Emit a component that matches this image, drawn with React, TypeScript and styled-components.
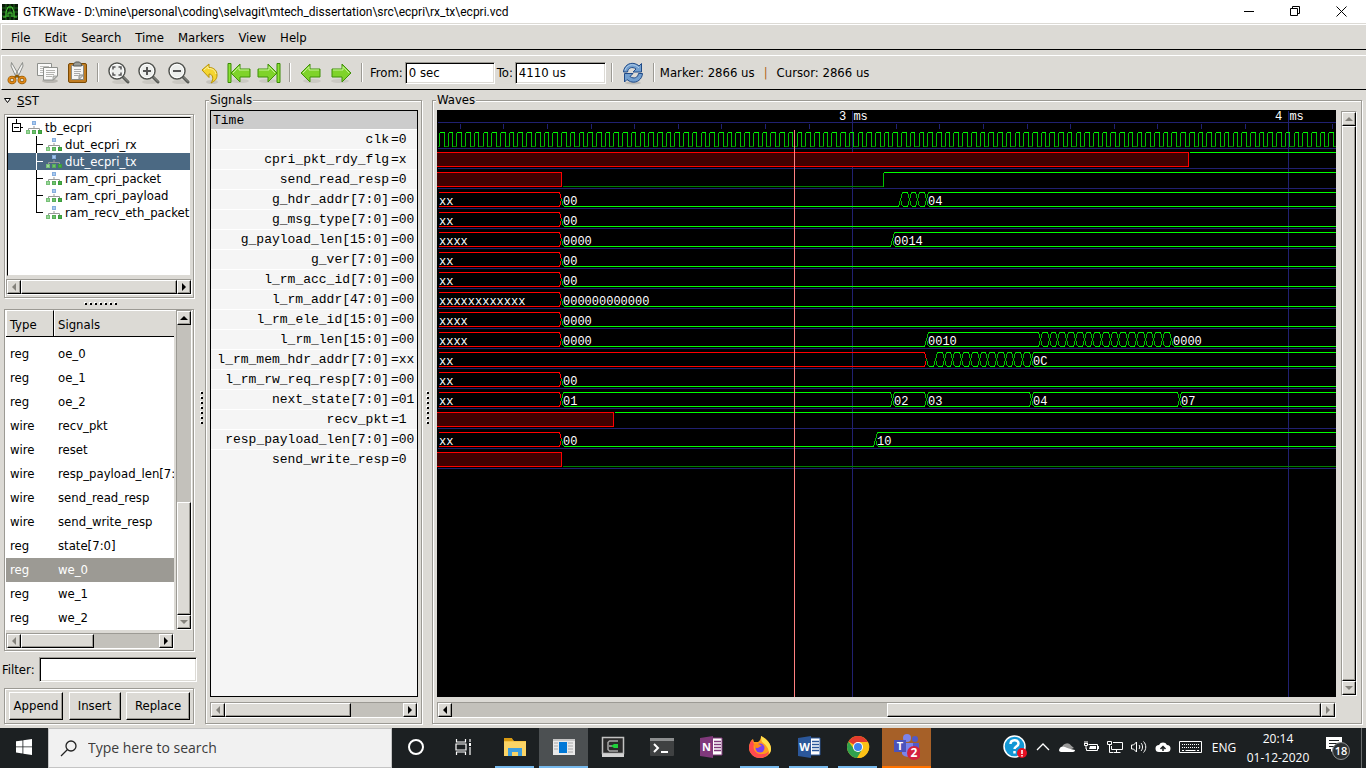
import React from "react";
import styled, { createGlobalStyle, css } from "styled-components";

const face = "#dcdad5";
const dark = "#9c9a94";
const trough = "#c3c1bb";
const ui = `"DejaVu Sans Condensed", "Noto Sans", sans-serif`;
const mono = `"Liberation Mono", monospace`;
const segoe = `"Open Sans", "Noto Sans", sans-serif`;

const Global = createGlobalStyle`
  * { box-sizing: border-box; }
  body { margin: 0; background: ${face}; color: #000; }
  button, input { font: inherit; color: inherit; }
`;

const raised = css`
  background: ${face};
  border: 1px solid;
  border-color: #fff #000 #000 #fff;
  box-shadow: inset -1px -1px ${dark};
`;
const etched = css`
  border: 1px solid ${dark};
  box-shadow: 1px 1px #fff, inset 1px 1px #fff;
`;

const Desktop = styled.div`
  height: 100vh;
  min-height: 600px;
  display: flex;
  flex-direction: column;
  overflow: hidden;
  font: 13px/16px ${ui};
`;

/* Title bar */
const TitleBar = styled.header`
  height: 23px;
  flex: none;
  display: flex;
  align-items: center;
  padding: 0 2px;
  gap: 5px;
  background: #fff;
  font: 12px/16px Roboto, ${segoe};
`;
const Title = styled.h1`
  flex: 1;
  margin: 0;
  font: inherit;
`;
const WinButtons = styled.div`
  display: flex;
`;
const WinButton = styled.button`
  width: 46px;
  height: 23px;
  padding: 0;
  border: 0;
  background: none;
  display: grid;
  place-items: center;
`;

/* Menus and toolbar */
const MenuBar = styled.nav`
  flex: none;
  height: 26px;
  margin: 1px 0 0 1px;
  padding: 1px 2px 0;
  display: flex;
  align-items: center;
  border-top: 1px solid #fff;
  border-left: 1px solid #fff;
  border-bottom: 1px solid #000;
`;
const MenuItem = styled.button`
  border: 0;
  background: none;
  padding: 0 7px;
`;
const ToolBar = styled.div`
  flex: none;
  height: 35px;
  margin: 5px 0 0 1px;
  display: flex;
  align-items: center;
  border-top: 1px solid #fff;
  border-left: 1px solid #fff;
  border-bottom: 1px solid #000;
`;
const Tool = styled.button`
  width: 30px;
  height: 30px;
  padding: 0;
  border: 0;
  background: none;
  display: grid;
  place-items: center;
`;
const Separator = styled.span`
  width: 2px;
  height: 19px;
  margin: 0 5px;
  border-left: 1px solid ${dark};
  border-right: 1px solid #fff;
`;
const Field = styled.label`
  display: flex;
  align-items: center;
  margin-left: 2px;
  gap: 2px;
`;
const TextBox = styled.input<{ $w?: number }>`
  width: ${p => (p.$w ? p.$w + "px" : "auto")};
  ${p => !p.$w && "flex: 1; min-width: 0;"}
  height: ${p => (p.$w ? 22 : 25)}px;
  padding: 0 3px;
  border: 1px solid;
  border-color: ${dark} #fff #fff ${dark};
  box-shadow: inset 1px 1px #000, inset -1px -1px ${face};
  background: #fff;
  outline: 0;
`;
const Readout = styled.output`
  display: flex;
  gap: 9px;
  white-space: nowrap;
`;
const Bar = styled.span`
  color: #b0641c;
`;

/* Work area */
const Work = styled.main`
  flex: 1;
  min-height: 0;
  display: flex;
  padding: 2px 4px 4px 0;
`;
const Sidebar = styled.aside`
  width: 197px;
  flex: none;
  display: flex;
  flex-direction: column;
`;
const Expander = styled.button`
  height: 17px;
  padding: 1px 0 0 4px;
  margin-bottom: 5px;
  border: 0;
  background: none;
  display: flex;
  align-items: center;
  gap: 6px;
`;
const Box = styled.div<{ $h?: number }>`
  ${etched}
  width: 190px;
  margin-left: 4px;
  ${p => (p.$h ? `height: ${p.$h}px; flex: none;` : "flex: 1; min-height: 0;")}
  display: flex;
  flex-direction: column;
`;
const Sunken = styled.ul`
  flex: 1;
  margin: 2px 2px 3px;
  padding: 1px 0 0;
  list-style: none;
  background: #fff;
  border: 1px solid;
  border-color: #000 ${face} ${face} #000;
`;
const TreeRow = styled.li<{ $on?: boolean }>`
  height: 17px;
  display: flex;
  align-items: center;
  white-space: nowrap;
  gap: 3px;
  ${p => p.$on && "background: #4b6983; color: #fff;"}
`;
const TreeFoot = styled.div`
  display: flex;
  flex-direction: column;
  margin: 0 1px 2px;
`;
const Grip = styled.div<{ $v?: boolean; $size: number }>`
  flex: none;
  ${p => (p.$v ? `width: ${p.$size}px;` : `height: ${p.$size}px; margin-left: 5px;`)}
  display: grid;
  place-items: center;
`;

/* Scrollbars */
const Track = styled.div<{ $v?: boolean }>`
  flex: none;
  display: flex;
  flex-direction: ${p => (p.$v ? "column" : "row")};
  ${p => (p.$v ? "width: 16px;" : "height: 16px;")}
  background: ${trough};
  border: 1px solid;
  border-color: ${dark} #fff #fff ${dark};
`;
const ArrowButton = styled.button`
  ${raised}
  flex: none;
  width: 14px;
  height: 14px;
  padding: 0;
  display: grid;
  place-items: center;
`;
const Rail = styled.div<{ $v?: boolean; $end?: boolean }>`
  flex: 1;
  min-height: 0;
  display: flex;
  flex-direction: ${p => (p.$v ? "column" : "row")};
  justify-content: ${p => (p.$end ? "flex-end" : "flex-start")};
`;
const Thumb = styled.div`
  ${raised}
`;

const turns = { left: 0, up: 90, right: 180, down: 270 };
function Arrow({ dir, off }: { dir: keyof typeof turns; off?: boolean }) {
  return (
    <svg width="8" height="8" viewBox="0 0 8 8">
      <path d="M6 0v8L2 4z" fill={off ? "#84827c" : "#000"} transform={`rotate(${turns[dir]} 4 4)`} />
    </svg>
  );
}
type ScrollProps = { v?: boolean; size: string; end?: boolean; offA?: boolean; offB?: boolean; label: string };
function Scroll({ v, size, end, offA, offB, label }: ScrollProps) {
  return (
    <Track $v={v} role="scrollbar" aria-label={label} aria-orientation={v ? "vertical" : "horizontal"}>
      <ArrowButton aria-label="Back"><Arrow dir={v ? "up" : "left"} off={offA} /></ArrowButton>
      <Rail $v={v} $end={end}>
        <Thumb style={v ? { height: size } : { width: size }} />
      </Rail>
      <ArrowButton aria-label="Forward"><Arrow dir={v ? "down" : "right"} off={offB} /></ArrowButton>
    </Track>
  );
}
function Dots({ v }: { v?: boolean }) {
  const at = [0, 1, 2, 3, 4, 5, 6];
  return (
    <svg width={v ? 3 : 34} height={v ? 34 : 3} shapeRendering="crispEdges">
      {at.map(i => (
        <g key={i} transform={v ? `translate(0 ${i * 5})` : `translate(${i * 5} 0)`}>
          <rect width="2" height="2" fill="#fff" />
          <rect x="1" y="1" width="2" height="2" fill="#000" />
        </g>
      ))}
    </svg>
  );
}

/* Signal search list */
const ListArea = styled.div`
  flex: 1;
  min-height: 0;
  display: flex;
  gap: 2px;
  padding: 0 1px 3px 1px;
`;
const ListView = styled.div`
  flex: 1;
  min-width: 0;
  display: flex;
  flex-direction: column;
  overflow: hidden;
  background: #fff;
`;
const ListHead = styled.div`
  height: 27px;
  flex: none;
  display: grid;
  grid-template-columns: 48px 1fr;
  background: ${face};
  border-bottom: 1px solid #000;
`;
const HeadCell = styled.button<{ $last?: boolean }>`
  padding: 2px 3px 0;
  text-align: left;
  background: none;
  border: solid #fff;
  border-width: 1px 0 0 1px;
  ${p => !p.$last && "border-right: 1px solid #000;"}
`;
const ListBody = styled.div`
  flex: 1;
  min-height: 0;
  display: flex;
  flex-direction: column;
  justify-content: flex-end;
  overflow: hidden;
`;
const SignalTable = styled.table`
  width: 100%;
  table-layout: fixed;
  border-collapse: collapse;
`;
const SignalRow = styled.tr<{ $on?: boolean }>`
  height: 24px;
  white-space: nowrap;
  ${p => p.$on && `background: ${dark}; color: #fff;`}
`;
const Cell = styled.td<{ $w?: number }>`
  width: ${p => (p.$w ? p.$w + "px" : "auto")};
  padding: 0 0 0 4px;
  overflow: hidden;
`;
const ListFoot = styled.div`
  width: 168px;
  margin: 0 0 1px 1px;
  display: flex;
  flex-direction: column;
`;
const FilterRow = styled.label`
  flex: none;
  display: flex;
  align-items: center;
  gap: 4px;
  margin: 6px 0;
  padding-left: 2px;
`;
const Buttons = styled.div`
  flex: 1;
  display: flex;
  justify-content: space-between;
  padding: 3px 3px 3px 4px;
`;
const PushButton = styled.button<{ $w: number }>`
  ${raised}
  width: ${p => p.$w}px;
  padding: 0;
`;

/* Signals and waves panels */
const Panel = styled.fieldset<{ $w?: number; $pad: string }>`
  ${etched}
  margin: 0;
  padding: ${p => p.$pad};
  min-width: 0;
  ${p => (p.$w ? `width: ${p.$w}px; flex: none;` : "flex: 1;")}
  display: flex;
  flex-direction: column;
  legend {
    padding: 0 1px;
    margin-left: -1px;
    background: ${face};
  }
`;
const NameList = styled.div`
  flex: 1;
  min-height: 0;
  margin-bottom: 5px;
  background: #f5f5f5;
  border: 1px solid #000;
  overflow: hidden;
  font: 13px/17px ${mono};
`;
const Names = styled.table`
  width: 100%;
  border-collapse: collapse;
  table-layout: fixed;
  th, td { padding: 0; font-weight: normal; white-space: nowrap; vertical-align: top; }
  thead th { background: #cccccc; height: 18px; text-align: left; padding: 1px 0 0 2px; }
`;
const NameRow = styled.tr`
  height: 20px;
  border-top: 1px solid #fff;
  td { padding-top: 1px; }
  td:first-child { text-align: right; padding-right: 2px; }
`;
const ValueCol = styled.col`
  width: 26px;
`;
const WaveArea = styled.div`
  flex: 1;
  min-height: 0;
  display: flex;
  gap: 5px;
`;
const WaveView = styled.div`
  flex: 1;
  min-width: 0;
  background: #000;
  overflow: hidden;
  svg { display: block; width: 100%; height: 100%; }
`;
const WaveScroll = styled.div`
  display: flex;
  flex-direction: column;
  padding: 1px 0;
  & > * { flex: 1; }
`;
const WaveFoot = styled.div`
  display: flex;
  flex-direction: column;
  margin: 5px 21px 0 0;
`;

/* Wave data. Time positions are pixels from the left edge of the view. */
type Step = [at: number, text: string];
type Trace =
  | { name: string; value: string; bit: [number, "x" | "0" | "1"][] }
  | { name: string; value: string; bus: Step[] };

const PERIOD = 8.72;
const run = (from: number, n: number): Step[] =>
  Array.from({ length: n }, (_, i) => [Math.round(from + i * PERIOD), "~"] as Step);

const traces: Trace[] = [
  { name: "clk", value: "0", bit: [] },
  { name: "cpri_pkt_rdy_flg", value: "x", bit: [[0, "x"], [751, "1"]] },
  { name: "send_read_resp", value: "0", bit: [[0, "x"], [124, "0"], [446, "1"]] },
  { name: "g_hdr_addr[7:0]", value: "00", bus: [[0, "xx"], [124, "00"], ...run(463, 3), [489, "04"]] },
  { name: "g_msg_type[7:0]", value: "00", bus: [[0, "xx"], [124, "00"]] },
  { name: "g_payload_len[15:0]", value: "00", bus: [[0, "xxxx"], [124, "0000"], [455, "0014"]] },
  { name: "g_ver[7:0]", value: "00", bus: [[0, "xx"], [124, "00"]] },
  { name: "l_rm_acc_id[7:0]", value: "00", bus: [[0, "xx"], [124, "00"]] },
  { name: "l_rm_addr[47:0]", value: "00", bus: [[0, "xxxxxxxxxxxx"], [124, "000000000000"]] },
  { name: "l_rm_ele_id[15:0]", value: "00", bus: [[0, "xxxx"], [124, "0000"]] },
  { name: "l_rm_len[15:0]", value: "00", bus: [[0, "xxxx"], [124, "0000"], [489, "0010"], ...run(603, 15), [734, "0000"]] },
  { name: "l_rm_mem_hdr_addr[7:0]", value: "xx", bus: [[0, "xx"], [489, "0"], ...run(498, 11), [594, "0C"]] },
  { name: "l_rm_rw_req_resp[7:0]", value: "00", bus: [[0, "xx"], [124, "00"]] },
  { name: "next_state[7:0]", value: "01", bus: [[0, "xx"], [124, "01"], [455, "02"], [489, "03"], [594, "04"], [742, "07"]] },
  { name: "recv_pkt", value: "1", bit: [[0, "x"], [176, "1"]] },
  { name: "resp_payload_len[7:0]", value: "00", bus: [[0, "xx"], [124, "00"], [438, "10"]] },
  { name: "send_write_resp", value: "0", bit: [[0, "x"], [124, "0"]] },
];
const FAR = 4000;

function Clock() {
  const n = Math.ceil(FAR / PERIOD);
  let hi = "", lo = "M0 36H2", edge = "";
  for (let i = 0; i < n; i++) {
    const a = Math.round(2 + i * PERIOD);
    const b = Math.round(6.6 + i * PERIOD);
    const c = Math.round(2 + (i + 1) * PERIOD);
    hi += `M${a} 22H${b}`;
    lo += `M${b} 36H${c}`;
    edge += `M${a} 22V36M${b} 22V36`;
  }
  return (
    <>
      <path d={edge} stroke="#00c000" />
      <path d={lo} stroke="#008000" />
      <path d={hi} stroke="#00ff00" />
    </>
  );
}

function BitTrace({ steps, y }: { steps: [number, string][]; y: number }) {
  return (
    <>
      {steps.map(([x, s], i) => {
        const end = steps[i + 1]?.[0] ?? FAR;
        if (s === "x")
          return <rect key={i} x={x - (i ? 0 : 2)} y={y} width={end - x + (i ? 0 : 2)} height="14" fill="#400000" stroke="#ff0000" />;
        const prev = steps[i - 1]?.[1];
        return (
          <g key={i}>
            <path d={`M${prev === "x" ? x + 1 : x} ${s === "1" ? y : y + 14}H${end}`} stroke={s === "1" ? "#00ff00" : "#008000"} />
            {prev === "0" && <path d={`M${x} ${y}v14`} stroke="#00c000" />}
          </g>
        );
      })}
    </>
  );
}

const isZero = (t: string) => /^0+$/.test(t);
function BusTrace({ steps, y }: { steps: Step[]; y: number }) {
  return (
    <>
      {steps.map(([x, text], i) => {
        const next = steps[i + 1];
        const red = text[0] === "x";
        const a = i ? x + 2 : 1;
        const b = next ? next[0] - 2 : FAR;
        const zero = isZero(text);
        let sides = "";
        if (i) sides += `M${x} ${y + 7}L${a} ${y + 14}` + (zero ? "" : `M${x} ${y + 7}L${a} ${y}`);
        if (next) sides += `M${b} ${y + 14}L${b + 2} ${y + 7}` + (zero ? "" : `M${b} ${y}L${b + 2} ${y + 7}`);
        return (
          <g key={i}>
            <path d={sides} stroke={red ? "#ff0000" : "#00c000"} />
            <path d={`M${a} ${y + 14}H${b}` + (zero ? "" : `M${a} ${y}H${b}`)} stroke={red ? "#ff0000" : "#00ff00"} />
          </g>
        );
      })}
    </>
  );
}

function Waves() {
  const ticks = Array.from({ length: 90 }, (_, i) => Math.round(22.8 + i * 43.6));
  return (
    <svg role="img" aria-label="Signal waveforms">
      <g shapeRendering="crispEdges" transform="translate(.5 .5)" fill="none">
        <g stroke="#202070">
          <path d={`M0 12H${FAR}`} />
          {ticks.map((t, i) => <path key={t} d={i % 10 === 9 ? `M${t} 0V${FAR}` : `M${t} 13v5`} />)}
          {traces.map((_, i) => <path key={i} d={`M0 ${38 + i * 20}H${FAR}`} />)}
        </g>
        <Clock />
        {traces.map((t, i) =>
          "bus" in t
            ? <BusTrace key={t.name} steps={t.bus} y={22 + i * 20} />
            : <BitTrace key={t.name} steps={t.bit} y={22 + i * 20} />
        )}
        <path d={`M357 19V${FAR}`} stroke="#ff8080" />
      </g>
      <g fill="#fff" fontFamily="Liberation Mono, monospace" fontSize="12">
        <text x="402" y="10" xmlSpace="preserve">3 ms</text>
        <text x="838" y="10" xmlSpace="preserve">4 ms</text>
        {traces.map((t, i) =>
          "bus" in t && t.bus.filter(s => s[1] !== "~" && s[1] !== "0").map(([x, s]) => (
            <text key={t.name + x} x={x + 2} y={35 + i * 20}>{s}</text>
          ))
        )}
      </g>
    </svg>
  );
}

/* Toolbar icons */
const Ico = ({ children, size = 24 }: { children: React.ReactNode; size?: number }) => (
  <svg width={size} height={size} viewBox="0 0 24 24" fill="none">{children}</svg>
);
const Cut = () => (
  <Ico>
    <path d="M6.500 1.500l7 12-2 3.500L6 5zM17.500 1.500l-7 12 2 3.500L18 5z" fill="#f4f4f2" stroke="#8c8e8a" />
    <ellipse cx="7" cy="19" rx="3" ry="2.700" stroke="#8f5902" strokeWidth="3" /><ellipse cx="17" cy="19" rx="3" ry="2.700" stroke="#8f5902" strokeWidth="3" />
    <ellipse cx="7" cy="19" rx="3" ry="2.700" stroke="#e58a1c" strokeWidth="1.500" /><ellipse cx="17" cy="19" rx="3" ry="2.700" stroke="#e58a1c" strokeWidth="1.500" />
    <path d="M9.500 16.500l2.500-2 2.500 2" stroke="#8f5902" strokeWidth="2" />
  </Ico>
);
const Copy = () => (
  <Ico>
    <ellipse cx="15" cy="20" rx="8" ry="2" fill="#b8b6b0" />
    <path d="M2.500 2.500h14v12h-14z" fill="#fafaf9" stroke="#8e908c" />
    <path d="M5 5.500h9M5 7.500h9M5 9.500h3M5 11.500h3" stroke="#bdbdba" />
    <path d="M8.500 6.500h14V15l-4 4h-10z" fill="#fafaf9" stroke="#8e908c" />
    <path d="M11 9.500h9M11 11.500h9M11 13.500h8M11 15.500h6" stroke="#b4b4b0" /><path d="M22 15h-4v4z" fill="#c9c9c5" stroke="#8e908c" strokeWidth=".7" />
  </Ico>
);
const Paste = () => (
  <Ico>
    <rect x="3.500" y="2.500" width="18" height="19" rx="1.500" fill="#c17d22" stroke="#7a4a05" />
    <path d="M6.500 4.500h12v14h-12z" fill="#f6f6f5" stroke="#888a85" />
    <path d="M9 8.500h7M9 10.500h7M9 12.500h6M9 14.500h4" stroke="#aaa" />
    <path d="M14 18.500l4.500-4.500h-4.500z" fill="#cfcfcc" stroke="#888a85" />
    <path d="M8.500 5V3l2-2h4l2 2v2z" fill="#9a9c97" stroke="#555753" />
  </Ico>
);
const Lens = ({ kind }: { kind: "fit" | "in" | "out" }) => (
  <Ico>
    <ellipse cx="13" cy="21" rx="8" ry="2" fill="#cbc9c3" />
    <path d="M16 16l5 5" stroke="#555753" strokeWidth="3" strokeLinecap="round" />
    <path d="M16 15.500l5 5" stroke="#999b96" strokeLinecap="round" />
    <circle cx="10" cy="10" r="8" fill="#eceeec" stroke="#50524e" strokeWidth="1.500" /><circle cx="10" cy="10" r="6.700" stroke="#fff" />
    {kind === "fit" && <path d="M8.500 6H6v2.500M11.500 6H14v2.500M8.500 14H6v-2.500M11.500 14H14v-2.500" stroke="#555" strokeWidth="1.500" />}
    {kind !== "fit" && <path d="M6 10h8" stroke="#555" strokeWidth="2" />}
    {kind === "in" && <path d="M10 6v8" stroke="#555" strokeWidth="2" />}
  </Ico>
);
const Undo = () => (
  <Ico>
    <ellipse cx="15" cy="21" rx="6" ry="2" fill="#c6c4be" />
    <path d="M5 9l7-6v3.500c5 0 8 3 8 7.500 0 4-2 6-6 8 3-4 2-9-2-9v3.500z" fill="#f5d531" stroke="#b89303" strokeLinejoin="round" />
    <path d="M7 9l4-3.500v2c5 0 7 2 8 5.500" stroke="#fdf3a2" />
  </Ico>
);
const Green = ({ right, stop }: { right?: boolean; stop?: boolean }) => (
  <Ico>
    <g transform={right ? "translate(24 0) scale(-1 1)" : undefined}>
      <ellipse cx="13" cy="20" rx="9" ry="2" fill="#cbc9c3" />
      <g transform={stop ? "translate(3 0)" : "translate(1 0)"}>
        <path d="M1 12l9-9v5h10v8H10v5z" fill="#7fd32a" stroke="#3f9008" strokeLinejoin="round" />
        <path d="M3 12l6-6.300V9h10" stroke="#c8f49a" />
      </g>
      {stop && <path d="M1 2.500h3v19H1z" fill="#8be234" stroke="#3a8a06" />}
    </g>
  </Ico>
);
const Refresh = () => (
  <Ico>
    <ellipse cx="12" cy="22" rx="8" ry="1.500" fill="#bebcb6" />
    <path d="M2.500 11C3 5 8 1.500 13 2.500c2 .3 4 1.500 5 2.500l2.500-2.500V11H12l3-3c-4-3-8-1-8.500 3z" fill="#729fcf" stroke="#204a87" strokeLinejoin="round" />
    <path d="M21.500 12.500c-.5 6-5.500 9.500-10.500 8.500-2-.3-4-1.500-5-2.500L3.500 21v-8.500H12l-3 3c4 3 8 1 8.500-3z" fill="#729fcf" stroke="#204a87" strokeLinejoin="round" />
    <path d="M4 9.500c1-4 5-6.500 9-5.500 2 .5 3.500 1.500 5 3" stroke="#b7d0ea" />
  </Ico>
);
const Module = () => (
  <svg width="16" height="14" viewBox="0 0 16 14">
    <path d="M8 5v3M2.500 9V7.500h11V9" stroke="#999" fill="none" />
    <rect x="6.500" y=".5" width="3" height="3" fill="#a9c9ee" stroke="#86aede" />
    <rect x=".5" y="9.500" width="3" height="3" fill="#9ad69a" stroke="#77c077" />
    <rect x="6.500" y="9.500" width="3" height="3" fill="#6cc46c" stroke="#59ac59" />
    <rect x="12.500" y="9.500" width="3" height="3" fill="#46b146" stroke="#3c9a3c" />
  </svg>
);
function Branch({ last, light }: { last?: boolean; light?: boolean }) {
  return (
    <svg width="35" height="17" shapeRendering="crispEdges">
      <path d={`M28.500 0V${last ? 9 : 17}M28 8.500h7`} stroke={light ? "#fff" : "#000"} fill="none" />
    </svg>
  );
}
const RootMark = () => (
  <svg width="15" height="17" shapeRendering="crispEdges">
    <path d="M8.500 0v4M4.500 4.500h8v8h-8zM6 8.500h5M13 8.500h2" stroke="#000" fill="none" />
  </svg>
);

/* Taskbar */
const TaskBar = styled.footer`
  height: 40px;
  flex: none;
  display: flex;
  background: #1c2022;
  color: #fff;
  font: 12px/19px ${segoe};
`;
const Task = styled.button<{ $w: number; $bg?: string; $line?: string; $inset?: number }>`
  flex: none;
  width: ${p => p.$w}px;
  padding: 0;
  border: 0;
  background: ${p => p.$bg ?? "none"};
  display: grid;
  place-items: center;
  grid-template: 38px 2px / 1fr;
  &::after {
    content: "";
    justify-self: stretch;
    align-self: stretch;
    margin: 0 ${p => p.$inset ?? 0}px;
    background: ${p => p.$line ?? "none"};
  }
`;
const Search = styled.label`
  width: 344px;
  display: flex;
  align-items: center;
  padding-left: 11px;
  gap: 11px;
  background: #f1f1f1;
  border: 1px solid #c4c4c4;
  input {
    flex: 1;
    min-width: 0;
    padding: 0;
    border: 0;
    outline: 0;
    background: none;
    font: 14px/20px ${segoe};
  }
  input::placeholder { color: #3c3c3c; opacity: 1; }
`;
const Apps = styled.div`
  display: flex;
  margin-left: 2px;
`;
const Tray = styled.div`
  flex: 1;
  display: flex;
  justify-content: flex-end;
`;
const DateTime = styled.button`
  width: 74px;
  padding: 0;
  border: 0;
  background: none;
  white-space: nowrap;
`;
const ShowDesktop = styled.button`
  width: 5px;
  padding: 0;
  border: 0;
  border-left: 1px solid #6a6d6e;
  background: none;
`;

const WinLogo = () => (
  <svg width="16" height="16" viewBox="0 0 16 16" fill="#fff">
    <path d="M0 2.300l6.500-.9v6.100H0zM7.300 1.300L16 0v7.500H7.300zM0 8.300h6.500v6.200L0 13.600zM7.300 8.300H16V16l-8.700-1.300z" />
  </svg>
);
const Mag = () => (
  <svg width="17" height="17" viewBox="0 0 17 17" fill="none" stroke="#222" strokeWidth="1.300">
    <circle cx="11" cy="6" r="5" /><path d="M7.500 9.500L1 16" />
  </svg>
);
const TaskView = () => (
  <svg width="18" height="18" viewBox="0 0 18 18" fill="none" stroke="#fff" strokeWidth="1.200">
    <path d="M1.500 1v3h9V1M1 6h10v6H1zM1.500 17v-3h9v3M15 1v3M15 9v8" /><rect x="14" y="5" width="2" height="3" fill="#fff" stroke="none" />
  </svg>
);
const Folder = () => (
  <Ico>
    <path d="M1 4h8l2 2h12v15H1z" fill="#f7c64a" /><path d="M1 3h8l1 3H1z" fill="#d99a12" /><path d="M1 7h22v14H1z" fill="#fbd465" />
    <path d="M5 21v-8h14v8h-4v-4H9v4z" fill="#3e9ede" />
  </Ico>
);
const AppWin = () => (
  <Ico>
    <path d="M1 4h22v16H1z" fill="#e9e9e9" /><path d="M1 4h22v2H1z" fill="#c5c5c5" />
    <path d="M7 7h8v11H7z" fill="#0078d7" /><path d="M16 8h5M16 11h5M16 14h5M16 17h5M2 8h4M2 11h4M2 14h4" stroke="#a8a8a8" />
  </Ico>
);
const Editor = () => (
  <Ico>
    <path d="M1.500 2.500h21v16h-21z" fill="#2a2a2a" stroke="#c2c2c2" strokeWidth="1.500" /><path d="M1 19h22v3H1z" fill="#d2d2d2" />
    <path d="M17 6H8.500L7 7.500v7L8.500 16H17M8 11h3" stroke="#a8a8a8" strokeWidth="1.500" /><path d="M10 11l3-2h4v4h-4z" fill="#1fd13a" />
  </Ico>
);
const Term = () => (
  <Ico>
    <rect y="3" width="24" height="18" rx="1" fill="#3f4142" /><path d="M0 3h24v3H0z" fill="#8d8f90" />
    <path d="M4 9l4 4-4 4" stroke="#fff" strokeWidth="2" /><path d="M11 17h7" stroke="#fff" strokeWidth="2" />
  </Ico>
);
const Office = ({ c, l }: { c: string; l: string }) => (
  <Ico>
    <path d="M12 3h11v17H12z" fill="#fff" stroke={c} /><path d="M15 6.500h7M15 9.500h7M15 12.500h7M15 15.500h7" stroke={c} strokeWidth="1.500" />
    <path d="M1 3l13-2v22L1 21z" fill={c} />
    <text x="7.500" y="16" textAnchor="middle" fontSize="11" fontWeight="700" fill="#fff" fontFamily="Open Sans, sans-serif">{l}</text>
  </Ico>
);
const Fox = () => (
  <Ico>
    <path d="M1 13c0-4 2-8 4-9l1 3h4c2-1 3-4 3-6 5 2 10 7 10 13 0 5-5 9-11 9S1 18 1 13z" fill="#ff9a1f" />
    <path d="M13 1c5 3 10 7 10 13 0 2-1 4-2 5 0-6-3-9-7-12-1-2-1-4-1-6z" fill="#ffe14d" />
    <path d="M1 13c0-3 1-6 3-8l2 4c-2 6 3 11 9 10 3 0 5-2 6-3-1 5-5 7-9 7C6 23 1 18 1 13z" fill="#ff4a4f" />
    <circle cx="12" cy="13" r="4.500" fill="#7a3ff0" /><path d="M6 9c3-1 5 0 8 2-2 0-3 2-5 2s-3-2-3-4z" fill="#ff8a16" />
  </Ico>
);
const Chrome = () => (
  <Ico>
    <circle cx="12" cy="12" r="11" fill="#fbc116" />
    <path d="M12 12L2.500 6.500A11 11 0 0 1 21.500 6.500L22 7H12z" fill="#e33b2e" />
    <path d="M2.500 6.500A11 11 0 0 0 11 23l5.500-9L12 12 8 14z" fill="#30a14e" />
    <path d="M12 7h10A11 11 0 0 1 11.500 23l5-9z" fill="#fbc116" />
    <circle cx="12" cy="12" r="5" fill="#fff" /><circle cx="12" cy="12" r="4" fill="#3f82ee" />
  </Ico>
);
const Teams = () => (
  <svg width="26" height="26" viewBox="0 0 26 26" fontFamily="Open Sans, sans-serif" fontWeight="700" textAnchor="middle" fill="#fff">
    <circle cx="13" cy="4" r="4" fill="#7b83eb" /><circle cx="21" cy="5" r="3" fill="#5059c9" />
    <path d="M8 9h11v8a6 6 0 0 1-11 3z" fill="#7b83eb" /><path d="M19 9h6v7a4 4 0 0 1-6 3z" fill="#5059c9" />
    <path d="M0 6h12v12H0z" fill="#4b53bc" /><text x="6" y="16" fontSize="11">T</text>
    <circle cx="20" cy="19" r="7" fill="#d3213f" /><text x="20" y="23" fontSize="12">2</text>
  </svg>
);
const Help = () => (
  <Ico>
    <circle cx="11.500" cy="11.500" r="10.500" fill="#1397d5" stroke="#fff" strokeWidth="1.500" />
    <path d="M7.500 9c0-5 8-5 8-.5 0 3-4 3-4 5.500M11.500 16v2.500" stroke="#fff" strokeWidth="2.500" />
    <circle cx="19" cy="18" r="5" fill="#e81123" /><path d="M19 15v4M19 20v1.500" stroke="#fff" strokeWidth="1.500" />
  </Ico>
);
const TI = ({ children, w = 16 }: { children: React.ReactNode; w?: number }) => (
  <svg width={w} height="16" viewBox={`0 0 ${w} 16`} fill="none" stroke="#fff">{children}</svg>
);
const Bell = () => (
  <svg width="28" height="28" viewBox="0 0 28 28">
    <path d="M2 4h16v12H10l-3 3v-3H2z" fill="#fff" /><path d="M5 7.500h10M5 10.500h10M5 13.500h6" stroke="#1c2022" />
    <circle cx="17" cy="18" r="8.500" fill="#2c3032" stroke="#8f9293" />
    <text x="17" y="22" fontSize="11" fontWeight="600" textAnchor="middle" fill="#fff" fontFamily="Open Sans, sans-serif">18</text>
  </svg>
);

const modules = ["dut_ecpri_rx", "dut_ecpri_tx", "ram_cpri_packet", "ram_cpri_payload", "ram_recv_eth_packet"];
const found = [
  ["reg", "clk"], ["reg", "oe_0"], ["reg", "oe_1"], ["reg", "oe_2"], ["wire", "recv_pkt"], ["wire", "reset"],
  ["wire", "resp_payload_len[7:0]"], ["wire", "send_read_resp"], ["wire", "send_write_resp"],
  ["reg", "state[7:0]"], ["reg", "we_0"], ["reg", "we_1"], ["reg", "we_2"],
];
const line = "#76b9ed";

export default function App() {
  return (
    <Desktop>
      <Global />
      <TitleBar>
        <svg width="16" height="16" viewBox="0 0 16 16">
          <path d="M0 0h16v16H0z" fill="#0a1a08" /><path d="M0 4h16M0 8h16M0 12h16M4 0v16M8 0v16M12 0v16" stroke="#1f6a1c" />
          <path d="M1 13h3V8l2-5h4l2 5v5h3M6 13V9h4v4" stroke="#4fd13a" fill="none" />
        </svg>
        <Title>GTKWave - D:\mine\personal\coding\selvagit\mtech_dissertation\src\ecpri\rx_tx\ecpri.vcd</Title>
        <WinButtons>
          <WinButton aria-label="Minimize"><svg width="11" height="11"><path d="M0 5.500h10" stroke="#000" /></svg></WinButton>
          <WinButton aria-label="Restore"><svg width="11" height="11" fill="none" stroke="#000"><path d="M.5 2.500h7v7h-7zM2.500 2.500v-2h7v7h-2" /></svg></WinButton>
          <WinButton aria-label="Close"><svg width="11" height="11"><path d="M.5.5l10 10M10.500.5l-10 10" stroke="#000" /></svg></WinButton>
        </WinButtons>
      </TitleBar>
      <MenuBar>
        {["File", "Edit", "Search", "Time", "Markers", "View", "Help"].map(m => <MenuItem key={m}>{m}</MenuItem>)}
      </MenuBar>
      <ToolBar>
        <Tool aria-label="Cut"><Cut /></Tool>
        <Tool aria-label="Copy"><Copy /></Tool>
        <Tool aria-label="Paste"><Paste /></Tool>
        <Separator />
        <Tool aria-label="Zoom fit"><Lens kind="fit" /></Tool>
        <Tool aria-label="Zoom in"><Lens kind="in" /></Tool>
        <Tool aria-label="Zoom out"><Lens kind="out" /></Tool>
        <Tool aria-label="Zoom undo"><Undo /></Tool>
        <Tool aria-label="To start"><Green stop /></Tool>
        <Tool aria-label="To end"><Green right stop /></Tool>
        <Separator />
        <Tool aria-label="Previous edge"><Green /></Tool>
        <Tool aria-label="Next edge"><Green right /></Tool>
        <Separator />
        <Field>From:<TextBox $w={90} defaultValue="0 sec" /></Field>
        <Field>To:<TextBox $w={91} defaultValue="4110 us" /></Field>
        <Separator />
        <Tool aria-label="Reload"><Refresh /></Tool>
        <Separator />
        <Readout><span>Marker: 2866 us</span><Bar>|</Bar><span>Cursor: 2866 us</span></Readout>
      </ToolBar>

      <Work>
        <Sidebar>
          <Expander>
            <svg width="7" height="6"><path d="M.5.5h6l-3 4z" fill="#fff" stroke="#000" /></svg>
            <span><u>S</u>ST</span>
          </Expander>
          <Box $h={184}>
            <Sunken>
              <TreeRow><RootMark /><Module />tb_ecpri</TreeRow>
              {modules.map((m, i) => (
                <TreeRow key={m} $on={i === 1}><Branch last={i === 4} light={i === 1} /><Module />{m}</TreeRow>
              ))}
            </Sunken>
            <TreeFoot><Scroll label="Tree" size="100%" offA /></TreeFoot>
          </Box>
          <Grip $size={11}><Dots /></Grip>
          <Box>
            <ListArea>
              <ListView>
                <ListHead><HeadCell>Type</HeadCell><HeadCell $last>Signals</HeadCell></ListHead>
                <ListBody>
                  <SignalTable>
                    <tbody>
                      {found.map(([t, s]) => (
                        <SignalRow key={s} $on={s === "we_0"}><Cell $w={48}>{t}</Cell><Cell>{s}</Cell></SignalRow>
                      ))}
                    </tbody>
                  </SignalTable>
                </ListBody>
              </ListView>
              <Scroll v label="Signal list" size="39%" end offB />
            </ListArea>
            <ListFoot><Scroll label="Signal list columns" size="53%" offA /></ListFoot>
          </Box>
          <FilterRow>Filter:<TextBox /></FilterRow>
          <Box $h={36}>
            <Buttons>
              <PushButton $w={54}>Append</PushButton>
              <PushButton $w={52}>Insert</PushButton>
              <PushButton $w={64}>Replace</PushButton>
            </Buttons>
          </Box>
        </Sidebar>
        <Grip $v $size={8}><Dots v /></Grip>
        <Panel $w={217} $pad="2px 3px 5px 4px">
          <legend>Signals</legend>
          <NameList>
            <Names>
              <colgroup><col /><ValueCol /></colgroup>
              <thead><tr><th colSpan={2}>Time</th></tr></thead>
              <tbody>
                {traces.map(t => <NameRow key={t.name}><td>{t.name}</td><td>={t.value}</td></NameRow>)}
              </tbody>
            </Names>
          </NameList>
          <Scroll label="Signal names" size="71%" offA />
        </Panel>
        <Grip $v $size={10}><Dots v /></Grip>
        <Panel $pad="2px 4px 5px 4px">
          <legend>Waves</legend>
          <WaveArea>
            <WaveView><Waves /></WaveView>
            <WaveScroll><Scroll v label="Waves rows" size="100%" offA offB /></WaveScroll>
          </WaveArea>
          <WaveFoot><Scroll label="Time" size="50%" end offB /></WaveFoot>
        </Panel>
      </Work>

      <TaskBar>
        <Task $w={48} aria-label="Start"><WinLogo /></Task>
        <Search><Mag /><input aria-label="Search" placeholder="Type here to search" /></Search>
        <Task $w={48} aria-label="Cortana"><svg width="18" height="18"><circle cx="9" cy="9" r="7" fill="none" stroke="#fff" strokeWidth="2" /></svg></Task>
        <Task $w={48} aria-label="Task view"><TaskView /></Task>
        <Apps>
          <Task $w={49} $line={line} $inset={5} aria-label="File Explorer"><Folder /></Task>
          <Task $w={49} $bg="#4c5052" $line={line} aria-label="GTKWave"><AppWin /></Task>
          <Task $w={49} aria-label="Editor"><Editor /></Task>
          <Task $w={49} aria-label="Terminal"><Term /></Task>
          <Task $w={49} aria-label="OneNote"><Office c="#80397b" l="N" /></Task>
          <Task $w={49} $line={line} $inset={5} aria-label="Firefox"><Fox /></Task>
          <Task $w={49} $line={line} $inset={5} aria-label="Word"><Office c="#2b579a" l="W" /></Task>
          <Task $w={49} $line={line} $inset={5} aria-label="Chrome"><Chrome /></Task>
          <Task $w={49} $bg="#a66028" $line="#ff7300" aria-label="Teams"><Teams /></Task>
        </Apps>
        <Tray>
          <Task $w={32} aria-label="Get help"><Help /></Task>
          <Task $w={24} aria-label="Show hidden icons"><TI><path d="M2 11l6-6 6 6" strokeWidth="1.300" /></TI></Task>
          <Task $w={24} aria-label="OneDrive"><TI><path d="M3.500 7A5 5 0 0 1 12 6.500L15 9 4 13z" fill="#999" stroke="none" /><path d="M0 11c1-4 4-4 6-3s5 2 10 3c0 1-1 2-2 2H2c-1 0-2-1-2-2z" fill="#fff" stroke="none" /></TI></Task>
          <Task $w={24} aria-label="Battery"><TI><path d="M5.500 5.500h9v6H3.500v-2M15.500 7v3" /><path d="M7 7h6v3H6z" fill="#fff" stroke="none" /><path d="M1 4.500h4M1.500 4v2.500h3V4M3 6v4M2 2v2M4 2v2" /></TI></Task>
          <Task $w={24} aria-label="Network"><TI><path d="M6 3.500h9.500v7h-11V7M6.500 13.500h7M9.500 11v2M.5 2.500h4v3h-4zM2.500 6v7.500H6" /></TI></Task>
          <Task $w={24} aria-label="Volume"><TI><path d="M.5 6h2l3-3v10l-3-3h-2zM8 6c1 1 1 3 0 4M10 4c2 2 2 6 0 8M12.500 2.500c3 3 3 8 0 11" /></TI></Task>
          <Task $w={24} aria-label="Upload"><TI><path d="M4 13a3.500 3.500 0 0 1 0-7A4.500 4.500 0 0 1 12 6a3.500 3.500 0 0 1 0 7z" fill="#fff" stroke="none" /><path d="M8 12V8M5.500 10L8 7.500l2.500 2.500" stroke="#1c2022" strokeWidth="1.500" /></TI></Task>
          <Task $w={32} aria-label="Touch keyboard"><TI w={24}><path d="M.5 2.500h22v11H.5z" /><path d="M3 5.500h18M3 8.500h18" strokeDasharray="1 1" /><path d="M3 11.500h2M6.500 11.500h10M18 11.500h2" /></TI></Task>
          <Task $w={34} aria-label="Language"><span>ENG</span></Task>
          <DateTime>20:14<br />01-12-2020</DateTime>
          <Task $w={46} aria-label="Notifications"><Bell /></Task>
          <ShowDesktop aria-label="Show desktop" />
        </Tray>
      </TaskBar>
    </Desktop>
  );
}
